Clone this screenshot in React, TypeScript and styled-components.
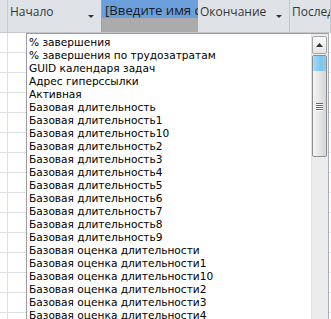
import React from "react";
import styled, { createGlobalStyle } from "styled-components";

const Global = createGlobalStyle`
  html, body { margin: 0; padding: 0; background: #fff; overflow: hidden; }
  #root { width: 331px; height: 319px; }
`;

const Frame = styled.div`
  position: relative;
  width: 331px;
  height: 319px;
  overflow: hidden;
  background: #fff;
`;

const Header = styled.div`
  display: flex;
  height: 32px;
  background: #dfe3e8;
  border-bottom: 1px solid #c4c8ce;
  font-family: "Open Sans", "Noto Sans", sans-serif;
  font-size: 12px;
  color: #363636;
`;

const Stub = styled.div`
  width: 7px;
  border-right: 1px solid #c9cdd3;
  flex: none;
`;

const HeadCell = styled.div<{ $w?: number; $edge?: string }>`
  position: relative;
  flex: ${(p) => (p.$w ? "none" : "1")};
  width: ${(p) => (p.$w ? `${p.$w}px` : "auto")};
  border-right: 1px solid ${(p) => p.$edge || "#c4c8ce"};
  padding: 3px 0 0 2px;
  box-sizing: border-box;
  white-space: nowrap;
  overflow: hidden;
`;

const Arrow = styled.span`
  position: absolute;
  right: 7px;
  top: 15px;
  width: 0;
  height: 0;
  border-left: 3px solid transparent;
  border-right: 3px solid transparent;
  border-top: 3px solid #333;
`;

const ActiveCell = styled.div`
  flex: none;
  width: 96px;
  display: flex;
  flex-direction: column;
  overflow: hidden;
  white-space: nowrap;
`;

const ActiveTop = styled.div`
  height: 18px;
  background: #6a9fdc;
  color: #1b1b1b;
  padding: 2px 0 0 3px;
  box-sizing: border-box;
  font-size: 13.2px;
  line-height: 16px;
  overflow: hidden;
`;

const ActiveBottom = styled.div`
  flex: 1;
  background: #ababab;
`;

const Body = styled.div`
  display: flex;
  flex-direction: column;
`;

const GridRow = styled.div`
  display: flex;
  height: 20px;
  border-bottom: 1px solid #dde1e6;
  box-sizing: border-box;
`;

const GridCell = styled.div<{ $w: number }>`
  width: ${(p) => p.$w}px;
  flex: none;
  border-right: 1px solid #dde1e6;
  box-sizing: border-box;
`;

const Dropdown = styled.div`
  position: absolute;
  left: 26px;
  top: 33px;
  width: 303px;
  bottom: -10px;
  background: #fff;
  border: 1px solid #9c9c9c;
  border-right-color: #a9aeb6;
  box-sizing: border-box;
  display: flex;
`;

const List = styled.ul`
  list-style: none;
  margin: 0;
  padding: 2px 0 0 2px;
  flex: 1;
  font-family: "DejaVu Sans", Verdana, sans-serif;
  font-size: 10.6px;
  color: #000;
`;

const Item = styled.li`
  height: 13px;
  line-height: 13px;
  white-space: nowrap;
`;

const ScrollBar = styled.div`
  width: 17px;
  flex: none;
  background: #ececec;
  border-left: 1px solid #e2e2e2;
  display: flex;
  flex-direction: column;
  padding: 2px 1px 0 0;
  box-sizing: border-box;
`;

const UpButton = styled.div`
  height: 16px;
  margin-bottom: 1px;
  border: 1px solid #a5a5a5;
  border-radius: 2px;
  background: linear-gradient(#fbfbfb, #e4e4e4);
  display: flex;
  align-items: center;
  justify-content: center;
`;

const Thumb = styled.div`
  height: 100px;
  border: 1px solid #8e8e8e;
  border-radius: 2px;
  background: linear-gradient(90deg, #f4f4f4, #d6d6d6);
  display: flex;
  flex-direction: column;
  align-items: center;
  overflow: hidden;
`;

const ThumbGlow = styled.div`
  align-self: stretch;
  height: 15px;
  background: linear-gradient(90deg, #a9dcf7, #7cc6ef 60%, #8ccbee);
`;

const Grip = styled.div`
  margin-top: 32px;
  display: flex;
  flex-direction: column;
  gap: 1px;
`;

const GripLine = styled.div`
  width: 7px;
  height: 1px;
  background: #6a6a6a;
  box-shadow: 0 1px 0 #fff;
`;

const items = [
  "% завершения",
  "% завершения по трудозатратам",
  "GUID календаря задач",
  "Адрес гиперссылки",
  "Активная",
  "Базовая длительность",
  "Базовая длительность1",
  "Базовая длительность10",
  "Базовая длительность2",
  "Базовая длительность3",
  "Базовая длительность4",
  "Базовая длительность5",
  "Базовая длительность6",
  "Базовая длительность7",
  "Базовая длительность8",
  "Базовая длительность9",
  "Базовая оценка длительности",
  "Базовая оценка длительности1",
  "Базовая оценка длительности10",
  "Базовая оценка длительности2",
  "Базовая оценка длительности3",
  "Базовая оценка длительности4",
  "Базовая оценка длительности5",
];

export default function App() {
  return (
    <Frame>
      <Global />
      <Header>
        <Stub />
        <HeadCell $w={94} $edge="#c89a5c">
          Начало
          <Arrow />
        </HeadCell>
        <ActiveCell>
          <ActiveTop>[Введите имя столбца]</ActiveTop>
          <ActiveBottom />
        </ActiveCell>
        <HeadCell $w={92}>
          Окончание
          <Arrow />
        </HeadCell>
        <HeadCell>Последователи</HeadCell>
      </Header>
      <Body>
        {Array.from({ length: 15 }).map((_, i) => (
          <GridRow key={i}>
            <GridCell $w={8} />
            <GridCell $w={94} />
          </GridRow>
        ))}
      </Body>
      <Dropdown>
        <List>
          {items.map((t) => (
            <Item key={t}>{t}</Item>
          ))}
        </List>
        <ScrollBar>
          <UpButton>
            <svg width="7" height="4" viewBox="0 0 7 4">
              <path d="M0 4 L3.5 0 L7 4 Z" fill="#333" />
            </svg>
          </UpButton>
          <Thumb>
            <ThumbGlow />
            <Grip>
              <GripLine />
              <GripLine />
              <GripLine />
              <GripLine />
            </Grip>
          </Thumb>
        </ScrollBar>
      </Dropdown>
    </Frame>
  );
}
